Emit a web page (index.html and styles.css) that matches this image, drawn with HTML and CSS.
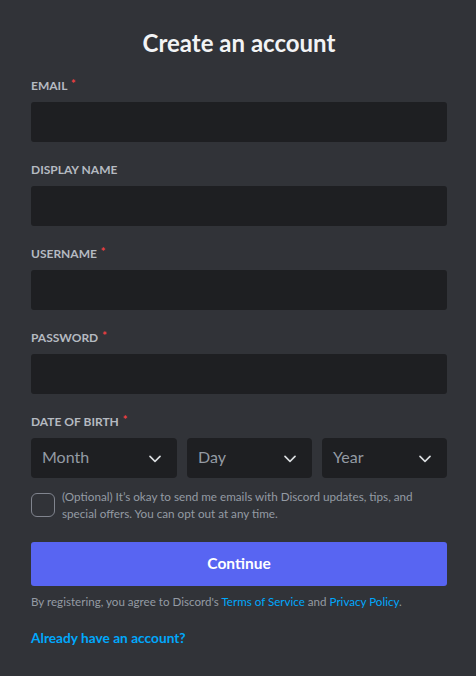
FILE: index.html
```html
<!DOCTYPE html>
<html lang="en">
<head>
<meta charset="utf-8">
<title>Create an account</title>
<link rel="stylesheet" href="styles.css">
</head>
<body>
<main class="page">
  <h1 class="title">Create an account</h1>

  <div class="field">
    <label class="label">Email <span class="req">*</span></label>
    <div class="input"></div>
  </div>
  <div class="field">
    <label class="label">Display Name</label>
    <div class="input"></div>
  </div>
  <div class="field">
    <label class="label">Username <span class="req">*</span></label>
    <div class="input"></div>
  </div>
  <div class="field">
    <label class="label">Password <span class="req">*</span></label>
    <div class="input"></div>
  </div>
  <div class="field">
    <label class="label">Date of Birth <span class="req">*</span></label>
    <div class="dob">
      <div class="select"><span>Month</span><svg class="chev" viewBox="0 0 24 24"><path d="M5.3 9.3a1 1 0 0 1 1.4 0L12 14.58l5.3-5.3a1 1 0 1 1 1.4 1.42l-6 6a1 1 0 0 1-1.4 0l-6-6a1 1 0 0 1 0-1.42Z"/></svg></div>
      <div class="select"><span>Day</span><svg class="chev" viewBox="0 0 24 24"><path d="M5.3 9.3a1 1 0 0 1 1.4 0L12 14.58l5.3-5.3a1 1 0 1 1 1.4 1.42l-6 6a1 1 0 0 1-1.4 0l-6-6a1 1 0 0 1 0-1.42Z"/></svg></div>
      <div class="select"><span>Year</span><svg class="chev" viewBox="0 0 24 24"><path d="M5.3 9.3a1 1 0 0 1 1.4 0L12 14.58l5.3-5.3a1 1 0 1 1 1.4 1.42l-6 6a1 1 0 0 1-1.4 0l-6-6a1 1 0 0 1 0-1.42Z"/></svg></div>
    </div>
  </div>

  <div class="optin">
    <div class="checkbox"></div>
    <p class="optin-text">(Optional) It’s okay to send me emails with Discord updates, tips, and special offers. You can opt out at any time.</p>
  </div>

  <button class="continue">Continue</button>

  <p class="terms">By registering, you agree to Discord's <a class="link">Terms of Service</a> and <a class="link">Privacy Policy</a>.</p>

  <a class="login link">Already have an account?</a>
</main>
</body>
</html>
```

FILE: styles.css
```css
html, body {
  margin: 0;
  padding: 0;
  background: #313338;
}
body {
  font-family: Lato, "Noto Sans", sans-serif;
  color: #dbdee1;
}
.page {
  width: 416px;
  padding: 28px 29px 0 31px;
  display: flex;
  flex-direction: column;
}
.title {
  margin: 0 0 20px;
  font-size: 24px;
  line-height: 30px;
  font-weight: 700;
  color: #f2f3f5;
  text-align: center;
}
.field {
  display: flex;
  flex-direction: column;
  margin-bottom: 20px;
}
.label {
  height: 16px;
  font-size: 12px;
  line-height: 16px;
  font-weight: 700;
  text-transform: uppercase;
  color: #b5bac1;
  margin-bottom: 8px;
}
.req {
  color: #f23f42;
  font-size: 11px;
  line-height: 0;
  vertical-align: 2px;
  padding-left: 1px;
}
.input {
  height: 40px;
  background: #1e1f22;
  border-radius: 3px;
}
.dob {
  display: grid;
  grid-template-columns: 146fr 125fr 125fr;
  column-gap: 10px;
}
.select {
  height: 40px;
  box-sizing: border-box;
  background: #1e1f22;
  border-radius: 4px;
  display: flex;
  align-items: center;
  justify-content: space-between;
  padding: 0 12px 3px 11px;
  font-size: 16px;
  color: #949ba4;
}
.chev {
  width: 20px;
  height: 20px;
  fill: #dbdee1;
  margin-top: 2px;
}
.optin {
  display: flex;
  align-items: center;
  gap: 7px;
  margin-top: -10px;
  margin-bottom: 20px;
}
.checkbox {
  flex: none;
  width: 22px;
  height: 22px;
  border: 1px solid #80848e;
  border-radius: 6px;
}
.optin-text {
  margin: 0;
  font-size: 11.7px;
  line-height: 17px;
  color: #949ba4;
}
.continue {
  height: 44px;
  border: none;
  border-radius: 3px;
  background: #5865f2;
  color: #fff;
  font-family: inherit;
  font-size: 15.5px;
  font-weight: 700;
  padding: 0 0 3px;
}
.terms {
  margin: 8px 0 0;
  font-size: 11.6px;
  line-height: 16px;
  color: #949ba4;
}
.link {
  color: #00a8fc;
  text-decoration: none;
}
.login {
  margin-top: 19px;
  font-size: 13.7px;
  line-height: 18px;
  font-weight: 700;
}
```
